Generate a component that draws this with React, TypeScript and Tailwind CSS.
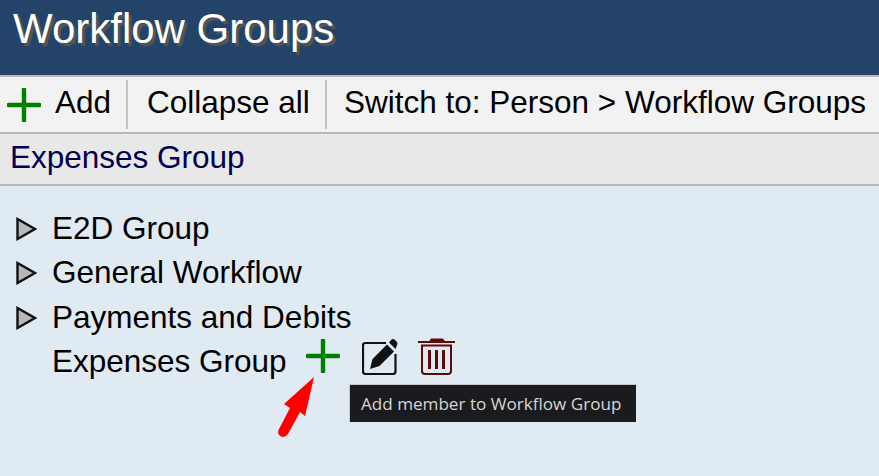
const sans = "font-['Liberation_Sans',Arial,sans-serif]";

function PlusIcon({ className }: { className?: string }) {
  return (
    <svg viewBox="0 0 34 34" width="34" height="34" className={className}>
      <path d="M17 1.500V32.500M1.500 17H32.500" stroke="#008000" strokeWidth="4.400" strokeLinecap="round" fill="none" />
    </svg>
  );
}

function EditIcon() {
  return (
    <svg viewBox="0 0 38 38" width="38" height="38">
      <path d="M24 5H3.500Q1 5 1 7.500V33.500Q1 36 3.500 36H31Q33.500 36 33.500 33.500V16" stroke="#111" strokeWidth="2.200" fill="none" />
      <path d="M8 31L10.500 21L25 6.500L32 13.500L17.500 28Z" fill="#111" />
      <path d="M27 4.500L29.500 1.500Q31 .5 32.500 1.500L35 4Q36 5.500 35 7L33.500 11Z" fill="#111" />
    </svg>
  );
}

function TrashIcon() {
  return (
    <svg viewBox="0 0 38 38" width="38" height="38">
      <path d="M0 4H37" stroke="#5c0a0a" strokeWidth="2.200" />
      <path d="M11 3.500L13 .5H25L27 3.500Z" fill="#5c0a0a" />
      <path d="M4 7.500H33V33Q33 36 30 36H7Q4 36 4 33Z" stroke="#5c0a0a" strokeWidth="2" fill="none" />
      <path d="M11.500 12V31M18.500 12V31M25.500 12V31" stroke="#5c0a0a" strokeWidth="3" fill="none" />
    </svg>
  );
}

function Arrow() {
  return (
    <svg viewBox="0 0 42 66" width="42" height="66">
      <path d="M37 2L28 41L23 37L11 59Q8 63 4 61.500Q0 59 1.500 55L13 33L7 29Z" fill="#ff0000" />
    </svg>
  );
}

function Triangle() {
  return (
    <svg viewBox="0 0 22 24" width="22" height="24" className="shrink-0">
      <path d="M2.500 2L20 12L2.500 22Z" fill="#b8b8b8" stroke="#111" strokeWidth="2.400" />
    </svg>
  );
}

function Row({ label }: { label: string }) {
  return (
    <div className="flex h-[44.500px] items-center">
      <div className="w-[37px] pt-[1px]">
        <Triangle />
      </div>
      <span>{label}</span>
    </div>
  );
}

export default function App() {
  return (
    <div className={`${sans} flex h-[476px] w-[879px] flex-col overflow-hidden bg-[#e0eaf3] text-[31.500px] text-black`}>
      <header className="h-[75px] shrink-0 bg-[#234468] pl-[13px] pt-[6px] text-[42px] leading-[46px] text-white [text-shadow:3px_3px_1px_#555]">
        Workflow Groups
      </header>
      <nav className="flex h-[59px] shrink-0 items-center whitespace-nowrap border-y-2 border-[#b9b9b9] bg-[#f2f2f2]">
        <div className="flex h-[49px] w-[128px] items-center border-r-2 border-[#c4c4c4] pl-[7px]">
          <PlusIcon className="mr-[14px]" />
          <span className="-translate-y-[2px]">Add</span>
        </div>
        <div className="flex h-[49px] w-[199px] items-center border-r-2 border-[#c4c4c4] pl-[19px]">
          <span className="-translate-y-[2px]">Collapse all</span>
        </div>
        <div className="-translate-y-[2px] pl-[17px]">Switch to: Person &gt; Workflow Groups</div>
      </nav>
      <div className="flex h-[52px] shrink-0 items-center border-b-2 border-[#b9b9b9] bg-[#e8e8e8] pb-[2px] pl-[10px] text-[#000050]">
        Expenses Group
      </div>
      <main className="relative flex-1 pl-[15px] pt-[20px]">
        <Row label="E2D Group" />
        <Row label="General Workflow" />
        <Row label="Payments and Debits" />
        <div className="flex h-[44.500px] items-center pl-[37px]">
          <span className="mr-[19px]">Expenses Group</span>
          <PlusIcon className="mr-[22px] -translate-y-[6px]" />
          <div className="mr-[18px] -translate-y-[5px]"><EditIcon /></div>
          <div className="-translate-y-[5px]"><TrashIcon /></div>
        </div>
        <div className="absolute left-[277px] top-[189px]">
          <Arrow />
        </div>
        <div className="absolute left-[349px] top-[198px] flex h-[38px] w-[287px] items-center whitespace-nowrap border-l border-t border-[#c8c8c8] bg-[#1b1b1f] pl-[11px] font-['Open_Sans',sans-serif] text-[17.100px] text-[#d6d6d6]">
          Add member to Workflow Group
        </div>
      </main>
    </div>
  );
}
